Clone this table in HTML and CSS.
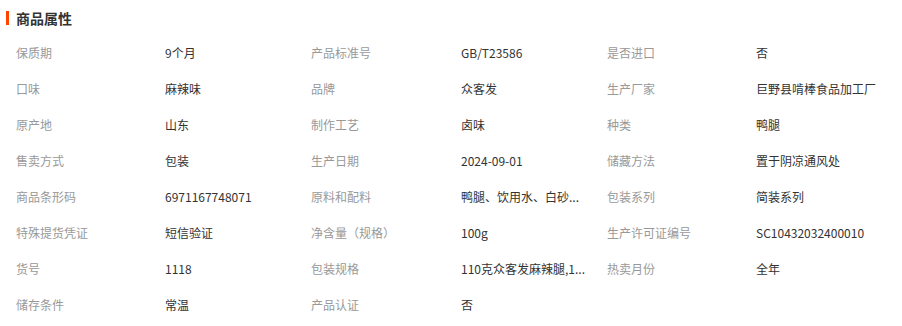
FILE: index.html
```html
<!DOCTYPE html>
<html lang="zh-CN">
<head>
<meta charset="utf-8">
<link rel="stylesheet" href="styles.css">
</head>
<body>
<div class="attrs">
  <h2 class="title">商品属性</h2>
  <div class="grid">
    <div class="lbl">保质期</div><div class="val">9个月</div>
    <div class="lbl">产品标准号</div><div class="val">GB/T23586</div>
    <div class="lbl">是否进口</div><div class="val">否</div>

    <div class="lbl">口味</div><div class="val">麻辣味</div>
    <div class="lbl">品牌</div><div class="val">众客发</div>
    <div class="lbl">生产厂家</div><div class="val">巨野县啃棒食品加工厂</div>

    <div class="lbl">原产地</div><div class="val">山东</div>
    <div class="lbl">制作工艺</div><div class="val">卤味</div>
    <div class="lbl">种类</div><div class="val">鸭腿</div>

    <div class="lbl">售卖方式</div><div class="val">包装</div>
    <div class="lbl">生产日期</div><div class="val">2024-09-01</div>
    <div class="lbl">储藏方法</div><div class="val">置于阴凉通风处</div>

    <div class="lbl">商品条形码</div><div class="val">6971167748071</div>
    <div class="lbl">原料和配料</div><div class="val">鸭腿、饮用水、白砂...</div>
    <div class="lbl">包装系列</div><div class="val">简装系列</div>

    <div class="lbl">特殊提货凭证</div><div class="val">短信验证</div>
    <div class="lbl">净含量（规格）</div><div class="val">100g</div>
    <div class="lbl">生产许可证编号</div><div class="val">SC10432032400010</div>

    <div class="lbl">货号</div><div class="val">1118</div>
    <div class="lbl">包装规格</div><div class="val">110克众客发麻辣腿,1...</div>
    <div class="lbl">热卖月份</div><div class="val">全年</div>

    <div class="lbl">储存条件</div><div class="val">常温</div>
    <div class="lbl">产品认证</div><div class="val">否</div>
    <div class="lbl"></div><div class="val"></div>
  </div>
</div>
</body>
</html>
```
FILE: styles.css
```css
html, body {
  margin: 0;
  padding: 0;
  background: #fff;
}
body {
  font-family: "Noto Sans CJK SC", "Liberation Sans", sans-serif;
  font-size: 12px;
  color: #333;
}
.attrs {
  width: 902px;
}
.title {
  margin: 0;
  height: 35px;
  display: flex;
  align-items: center;
  font-size: 14px;
  font-weight: bold;
  color: #333;
  padding-left: 6px;
  box-sizing: border-box;
  line-height: 1;
}
.title::before {
  content: "";
  width: 3px;
  height: 14px;
  background: #ff4400;
  margin-right: 7px;
}
.grid {
  display: grid;
  grid-template-columns: 149px 146px 150px 146px 149px 1fr;
  grid-auto-rows: 36px;
  padding-left: 16px;
}
.lbl, .val {
  line-height: 36px;
  white-space: nowrap;
}
.lbl {
  color: #999;
}
.val {
  color: #333;
}
```
